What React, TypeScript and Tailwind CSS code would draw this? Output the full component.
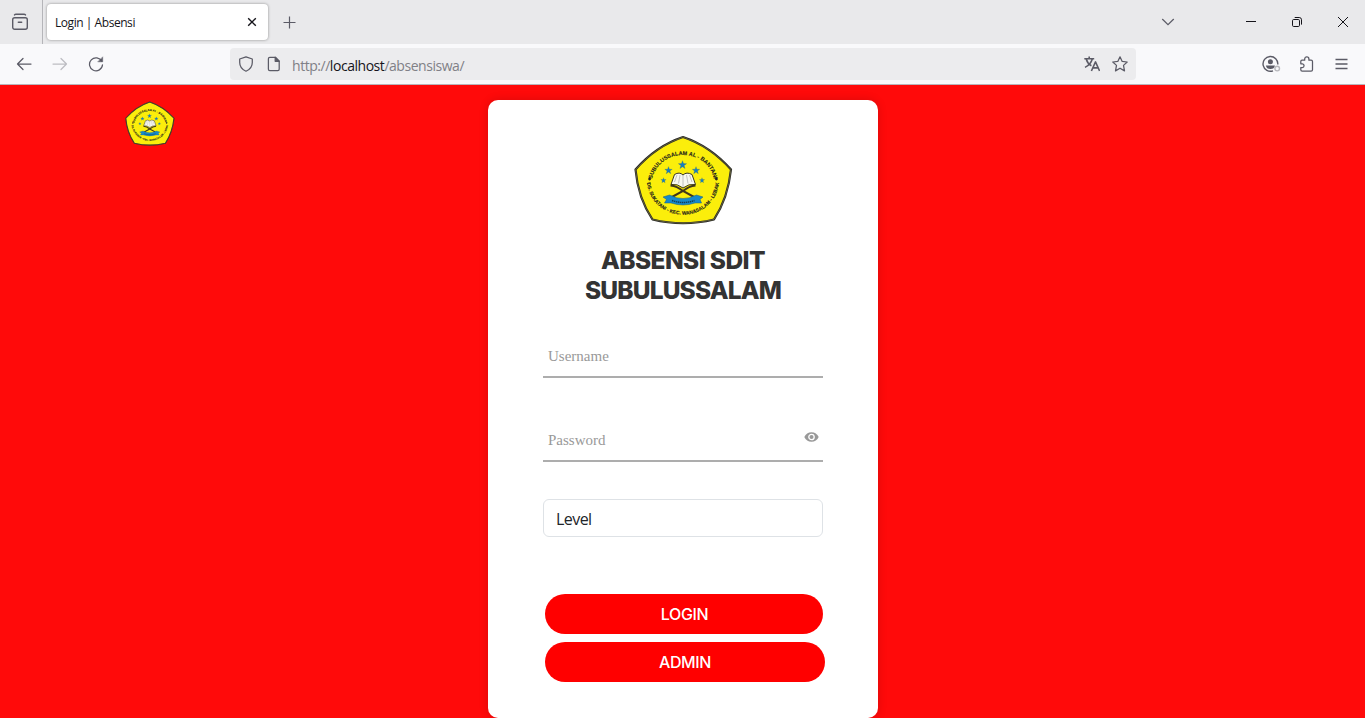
import type { ReactNode } from "react";

function Icon({ size = 16, className = "", children }: { size?: number; className?: string; children: ReactNode }) {
  return (
    <svg
      width={size}
      height={size}
      viewBox="0 0 16 16"
      fill="none"
      stroke="currentColor"
      strokeWidth="1.25"
      strokeLinecap="round"
      strokeLinejoin="round"
      className={"block shrink-0 " + className}
    >
      {children}
    </svg>
  );
}

const STAR = "M0 -4.3 L1 -1.4 L4.1 -1.35 L1.6 .5 L2.55 3.5 L0 1.75 L-2.55 3.5 L-1.6 .5 L-4.1 -1.35 L-1 -1.4Z";

function Emblem({ id, className }: { id: string; className: string }) {
  const shape = "M49 2 Q76 11 97 34.5 Q94 63 80 84.5 Q49 92 18.5 84.5 Q4 63 1.5 34.5 Q22 11 49 2Z";
  return (
    <svg viewBox="0 0 99 90" className={className} preserveAspectRatio="none">
      <path d={shape} fill="#fbee0b" stroke="#262626" strokeWidth="2.2" strokeLinejoin="round" />
      <path d={shape} fill="none" stroke="#9a9750" strokeWidth=".5" />
      <defs>
        <path id={id + "-top"} d="M17.5 50 A31.5 30 0 0 1 80.5 50" />
        <path id={id + "-bottom"} d="M13 38 V45 A36 34.8 0 0 0 85 45 V38" />
      </defs>
      <g fill="#1c1c1c" stroke="#1c1c1c" strokeWidth=".12" fontFamily="Liberation Sans, sans-serif" fontWeight="700" textAnchor="middle">
        <text fontSize="5.5">
          <textPath href={"#" + id + "-top"} startOffset="50%">SUBULUSSALAM AL - BANTANI</textPath>
        </text>
        <text fontSize="4.9">
          <textPath href={"#" + id + "-bottom"} startOffset="50%">DS. SUKATANI - KEC. WANASALAM - LEBAK</textPath>
        </text>
      </g>
      <circle cx="15.6" cy="44" r="1.4" fill="#222" />
      <circle cx="82.4" cy="44" r="1.4" fill="#222" />
      <g fill="#147fc4" stroke="#35616b" strokeWidth=".3">
        <path d={STAR} transform="translate(48.5 30)" />
        <path d={STAR} transform="translate(34.5 35.5) scale(.9)" />
        <path d={STAR} transform="translate(62 35.5) scale(.9)" />
        <path d={STAR} transform="translate(29.5 45.5) scale(.65)" />
        <path d={STAR} transform="translate(68 45.5) scale(.65)" />
      </g>
      <path d="M37 49.5 L40.5 39.5 Q45.5 36.5 49 40 Q52.5 36.5 58 39.5 L61.5 49.5 Q54.5 48.5 49 53 Q43.5 48.5 37 49.5Z" fill="#f8f8ef" stroke="#39351f" strokeWidth="1" />
      <path d="M49 40 V52 M43 40 L40.5 47 M46 40 L44.5 48.5 M55.5 40 L58 47 M52.5 40 L54 48.5" fill="none" stroke="#aaa" strokeWidth=".7" />
      <path d="M36.5 50.5 Q43 51 49 56 L60 62 M61.5 50.5 Q55 51 49 56 L38 62" fill="none" stroke="#40371a" strokeWidth="2" />
      <path d="M29 62 L35.5 60 Q49 67 62.5 60 L69 62 L66 64.5 L67.5 68 L61 68 Q49 72 37 68 L30.5 68 L32.5 64.5Z" fill="#1689cb" stroke="#195d7b" strokeWidth=".5" />
      <path d="M38 65.5 Q49 69.5 60.5 65.5" fill="none" stroke="#123f59" strokeWidth="1.4" strokeDasharray="1.4 .6" />
    </svg>
  );
}

function TabStrip() {
  return (
    <div className="flex h-11 bg-[#e9e9eb] text-[#5b5b66]">
      <div className="flex w-[43px] items-center justify-center border-r border-[#b5b5b9] pr-0.5">
        <svg width="18" height="18" viewBox="0 0 18 18" fill="none" stroke="currentColor" strokeWidth="1.4" strokeLinecap="round">
          <path d="M3.5 1.9Q4 1.2 5 1.2H13Q14 1.2 14.5 1.9" />
          <rect x="1.7" y="4.7" width="14.6" height="11.6" rx="2" />
          <path d="M7.3 9.2H10.7" />
        </svg>
      </div>
      <div className="ml-1 mt-1 flex h-9 w-[221px] items-center justify-between rounded-[4px] bg-white pl-2 pr-[11px] text-[#15141a] shadow-[0_0_3px_rgba(0,0,0,0.4)]">
        <span className="mt-0.5 font-['Open_Sans',sans-serif] text-[12px] tracking-[-0.45px]">Login | Absensi</span>
        <svg width="10" height="10" viewBox="0 0 10 10" stroke="currentColor" strokeWidth="1.4"><path d="M1.2 1.2L8.8 8.8M8.8 1.2L1.2 8.8" /></svg>
      </div>
      <svg className="ml-[15px] mt-4" width="13" height="13" viewBox="0 0 13 13" stroke="currentColor" strokeWidth="1.2"><path d="M6.5 .5V12.5M.5 6.5H12.5" /></svg>
      <div className="ml-auto flex items-center text-[#15141a]">
        <svg className="mr-[70px] text-[#5b5b66]" width="14" height="8" viewBox="0 0 14 8" fill="none" stroke="currentColor" strokeWidth="1.2" strokeLinecap="round"><path d="M1.5 1.3L7 6.7L12.5 1.3" /></svg>
        <svg className="mr-[34px]" width="12" height="12" viewBox="0 0 12 12" stroke="currentColor"><path d="M1 5.5H11" /></svg>
        <svg className="mr-[34px]" width="12" height="12" viewBox="0 0 12 12" fill="none" stroke="currentColor"><rect x="1.5" y="3.5" width="7" height="7" rx="1.2" /><path d="M3.7 1.5H8.2Q10.5 1.5 10.5 3.8V8.6" /></svg>
        <svg className="mr-4" width="12" height="12" viewBox="0 0 12 12" stroke="currentColor"><path d="M1 1L11 11M11 1L1 11" /></svg>
      </div>
    </div>
  );
}

function Toolbar() {
  return (
    <div className="flex h-[41px] items-center border-b border-[#b9b4ba] bg-[#f9f9fb] text-[#5b5b66]">
      <div className="flex w-[230px] items-center gap-5 pl-4">
        <Icon><path d="M15 8H1.5M7 2.5L1.5 8L7 13.5" /></Icon>
        <Icon className="text-[#bdbdc2]"><path d="M1 8H14.5M9 2.5L14.5 8L9 13.5" /></Icon>
        <Icon><path d="M13.8 5.3A6.5 6.5 0 1 0 14.5 8.8" /><path d="M14.7 1.2V5.8H10.1Z" fill="currentColor" strokeWidth=".5" /></Icon>
      </div>
      <div className="flex h-8 w-[906px] items-center rounded-[4px] bg-[#ececee] pl-2 pr-2">
        <Icon><path d="M8 .8L14.3 3V6.5Q14.3 12.5 8 15.2Q1.7 12.5 1.7 6.5V3Z" /></Icon>
        <Icon className="ml-3"><path d="M3.8 1.3H9.3L13.2 5.2V13.3Q13.2 14.7 11.8 14.7H3.8Q2.4 14.7 2.4 13.3V2.7Q2.4 1.3 3.8 1.3Z" /><path d="M9.2 1.3V5.3H13.2Z" fill="currentColor" /></Icon>
        <span className="ml-[10px] mt-0.5 font-['Open_Sans',sans-serif] text-[14px] tracking-[-0.46px] text-[#808086]">http://<span className="text-[#15141a]">localhost</span>/absensiswa/</span>
        <Icon className="ml-auto"><g strokeWidth="1.6" strokeLinecap="butt"><path d="M.3 2.8H10.2M5.2 .5V2.8M8.4 2.8Q6.7 8.7 1 11.4M2.2 3Q3.6 7.8 7.4 9.8" /><path d="M7.4 15L11.5 5.9L15.6 15M8.9 11.9H14.2" /></g></Icon>
        <Icon className="ml-3"><path d="M8 .8L10.2 5.4L15.2 6L11.5 9.4L12.5 14.9L8 12.2L3.5 14.9L4.5 9.4L.8 6L5.8 5.4Z" /></Icon>
      </div>
      <div className="ml-auto flex items-center pr-[17px]">
        <svg className="mr-[18px]" width="19" height="18" viewBox="0 0 19 18" fill="none" stroke="currentColor" strokeWidth="1.4">
          <path d="M11 15.8A7.4 7.4 0 1 1 15.8 9.5" />
          <circle cx="8.4" cy="6.7" r="2.5" fill="currentColor" stroke="none" />
          <path d="M3.9 10.4H12.9Q12.4 13.9 8.4 13.9T3.9 10.4Z" fill="currentColor" stroke="none" />
          <circle cx="15.2" cy="13.6" r="2.3" stroke="#b8b8bd" />
        </svg>
        <Icon className="mr-5"><path d="M1.8 5.4Q1.8 4.2 3 4.2H5.7V3A2.1 2.1 0 0 1 9.9 3V4.2H12.1Q13.5 4.2 13.5 5.6V13.7Q13.5 15.1 12.1 15.1H3.2Q1.8 15.1 1.8 13.7V11.5H3.2A1.8 1.8 0 0 0 3.2 7.8H1.8Z" /></Icon>
        <svg width="13" height="12" viewBox="0 0 13 12" stroke="currentColor" strokeWidth="1.3"><path d="M.5 1.5H12.5M.5 6H12.5M.5 10.5H12.5" /></svg>
      </div>
    </div>
  );
}

export default function App() {
  return (
    <div className="flex h-[718px] w-[1365px] flex-col overflow-hidden font-['Noto_Sans','Open_Sans',sans-serif]">
      <TabStrip />
      <Toolbar />
      <main className="flex flex-1 items-start bg-[#ff0a0a] pt-[15px]">
        <div className="flex w-[488px] pl-[125px] pt-[1px]">
          <Emblem id="corner" className="h-[45px] w-[50px]" />
        </div>
        <section className="flex h-[618px] w-[390px] flex-col rounded-[10px] bg-white px-[55px] shadow-[0_0_10px_rgba(0,0,0,0.15)]">
          <Emblem id="main" className="ml-[91px] mt-[35px] h-[90px] w-[99px]" />
          <h1 className="mt-5 text-center font-['Inter',sans-serif] text-[24.5px] font-extrabold leading-[30px] tracking-[-0.85px] text-[#333]">
            <span className="tracking-[-0.6px]">ABSENSI SDIT</span><br />SUBULUSSALAM
          </h1>
          <div className="mt-[33px] flex h-10 items-center border-b-2 border-[#adadad] pb-[2px] pl-[5px] font-['Liberation_Serif',serif] text-[15px] text-[#999]">Username</div>
          <div className="mt-11 flex h-10 items-center justify-between border-b-2 border-[#adadad] pb-[2px] pl-[5px] pr-[4px] font-['Liberation_Serif',serif] text-[15px] text-[#999]">
            <span>Password</span>
            <svg className="mb-[6px]" width="15" height="10" viewBox="0 0 15 10"><path d="M.3 5Q2.5 .2 7.5 .2T14.7 5Q12.5 9.8 7.5 9.8T.3 5Z" fill="#999" /><circle cx="7.5" cy="5" r="2.7" fill="#999" stroke="white" strokeWidth="1.3" /></svg>
          </div>
          <div className="mt-[37px] flex h-[38px] items-center rounded-[6px] border border-[#dee2e6] px-3 pt-[2px] font-['Open_Sans',sans-serif] text-[16px] tracking-[-0.55px] text-[#212529]">Level</div>
          <button className="ml-[2px] mt-[57px] h-10 w-[278px] rounded-[20px] bg-[#f00] pl-px font-['Inter',sans-serif] text-[16px] font-medium tracking-[-0.35px] text-white">LOGIN</button>
          <button className="ml-[2px] mt-2 h-10 w-[280px] rounded-[20px] bg-[#f00] font-['Inter',sans-serif] text-[16px] font-medium tracking-[-0.35px] text-white">ADMIN</button>
        </section>
      </main>
    </div>
  );
}
